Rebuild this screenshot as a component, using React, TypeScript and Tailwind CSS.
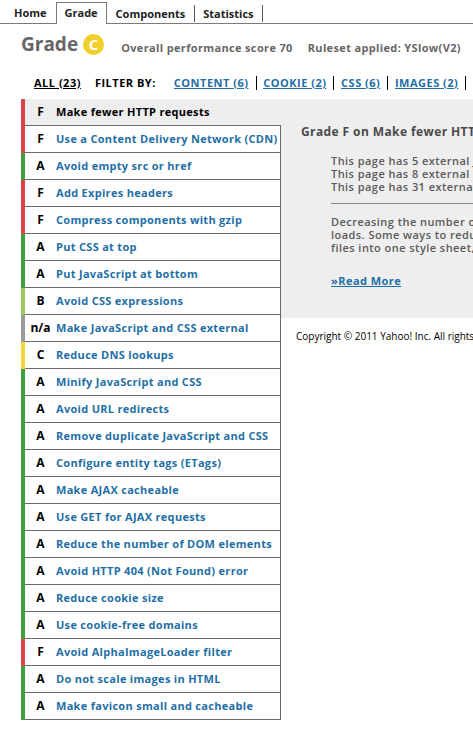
import React from "react";

const rules: [string, string][] = [
  ["F", "Make fewer HTTP requests"],
  ["F", "Use a Content Delivery Network (CDN)"],
  ["A", "Avoid empty src or href"],
  ["F", "Add Expires headers"],
  ["F", "Compress components with gzip"],
  ["A", "Put CSS at top"],
  ["A", "Put JavaScript at bottom"],
  ["B", "Avoid CSS expressions"],
  ["n/a", "Make JavaScript and CSS external"],
  ["C", "Reduce DNS lookups"],
  ["A", "Minify JavaScript and CSS"],
  ["A", "Avoid URL redirects"],
  ["A", "Remove duplicate JavaScript and CSS"],
  ["A", "Configure entity tags (ETags)"],
  ["A", "Make AJAX cacheable"],
  ["A", "Use GET for AJAX requests"],
  ["A", "Reduce the number of DOM elements"],
  ["A", "Avoid HTTP 404 (Not Found) error"],
  ["A", "Reduce cookie size"],
  ["A", "Use cookie-free domains"],
  ["F", "Avoid AlphaImageLoader filter"],
  ["A", "Do not scale images in HTML"],
  ["A", "Make favicon small and cacheable"],
];

function barClass(g: string) {
  switch (g) {
    case "F":
      return "bg-[#d9444a]";
    case "A":
      return "bg-[#3d9f3d]";
    case "B":
      return "bg-[#a2c75c]";
    case "C":
      return "bg-[#f3d63a]";
    default:
      return "bg-[#9b9b9b]";
  }
}

export default function App() {
  return (
    <div
      className="w-[473px] h-[743px] overflow-hidden bg-white text-[#222]"
      style={{ fontFamily: '"Open Sans", "DejaVu Sans", sans-serif' }}
    >
      {/* Tabs */}
      <div className="flex items-end h-[24px] border-b border-[#7a7a7a] pl-[4px] text-[11px] font-bold text-[#222]">
        <div className="h-[20px] flex items-center pl-[10px] pr-[9px]">Home</div>
        <div className="h-[22px] flex items-center px-[8px] bg-white border border-b-0 border-[#7a7a7a] mb-[-1px] pb-[1px]">
          Grade
        </div>
        <div className="h-[20px] flex items-center">
          <span className="px-[9px] border-r border-[#555] leading-[17px]">Components</span>
        </div>
        <div className="h-[20px] flex items-center">
          <span className="px-[8px] border-r border-[#555] leading-[17px]">Statistics</span>
        </div>
      </div>

      {/* Grade heading */}
      <div className="flex items-center h-[40px] pl-[21px]">
        <span className="text-[19px] font-bold text-[#666] leading-none">Grade</span>
        <span className="ml-[5px] w-[21px] h-[21px] rounded-full bg-[#f3cf2c] text-white text-[15px] font-bold flex items-center justify-center leading-none">
          C
        </span>
        <span className="ml-[17px] mt-[8px] text-[11px] font-bold text-[#666] tracking-[0.35px]">
          Overall performance score 70
        </span>
        <span className="ml-[15px] mt-[8px] text-[11px] font-bold text-[#666] tracking-[0.35px]">
          Ruleset applied: YSlow(V2)
        </span>
      </div>

      {/* Filter row */}
      <div className="flex items-center h-[35px] pt-[3px] pl-[34px] text-[11px] font-bold whitespace-nowrap tracking-[0.5px]">
        <span className="underline text-black">ALL (23)</span>
        <span className="ml-[14px] text-black">FILTER BY:</span>
        <span className="ml-[18px] underline text-[#1f6fa6]">CONTENT (6)</span>
        <span className="mx-[7px] w-px h-[14px] bg-black" />
        <span className="underline text-[#1f6fa6]">COOKIE (2)</span>
        <span className="mx-[7px] w-px h-[14px] bg-black" />
        <span className="underline text-[#1f6fa6]">CSS (6)</span>
        <span className="mx-[7px] w-px h-[14px] bg-black" />
        <span className="underline text-[#1f6fa6]">IMAGES (2)</span>
        <span className="mx-[7px] w-px h-[14px] bg-black" />
      </div>

      {/* Main */}
      <div className="flex">
        <div className="ml-[21px] w-[260px] shrink-0">
          {rules.map(([g, name], i) => {
            const selected = i === 0;
            return (
              <div key={name} className="flex h-[27px]">
                <div className={`w-[4px] shrink-0 ${barClass(g)}`} />
                <div
                  className={`flex flex-1 items-center border-b border-[#6a6a6a] ${
                    selected ? "bg-[#eeeeee]" : "bg-white border-r"
                  }`}
                >
                  <span className="w-[31px] text-center text-[12px] font-bold text-black">{g}</span>
                  <span
                    className={`text-[11px] font-bold whitespace-nowrap tracking-[0.3px] ${
                      selected ? "text-black" : "text-[#1f6fa6]"
                    }`}
                  >
                    {name}
                  </span>
                </div>
              </div>
            );
          })}
        </div>

        <div className="flex-1 min-w-0 overflow-hidden">
          <div className="h-[219px] bg-[#eeeeee] pl-[20px] pt-[24px] whitespace-nowrap">
            <div className="text-[12px] font-bold text-[#4a4a4a] tracking-[0.4px]">
              Grade F on Make fewer HTTP requests
            </div>
            <div className="pl-[30px] mt-[13px] text-[11px] font-semibold text-[#5a5a5a] leading-[13px] tracking-[0.45px]">
              <div>This page has 5 external Javascript scripts.</div>
              <div>This page has 8 external stylesheets.</div>
              <div>This page has 31 external background images.</div>
              <div className="border-t border-[#888] mt-[10px] mb-[11px]" />
              <div>Decreasing the number of components on a page reduces the number of HTTP requests.</div>
              <div>loads. Some ways to reduce the number of components include: combine files.</div>
              <div>files into one style sheet, and use CSS Sprites and image maps.</div>
              <div className="mt-[20px]">
                <span className="text-[#1f6fa6] underline font-bold">»Read More</span>
              </div>
            </div>
          </div>
          <div className="pl-[15px] pt-[11px] text-[10px] text-black whitespace-nowrap">
            Copyright © 2011 Yahoo! Inc. All rights reserved.
          </div>
        </div>
      </div>
    </div>
  );
}
